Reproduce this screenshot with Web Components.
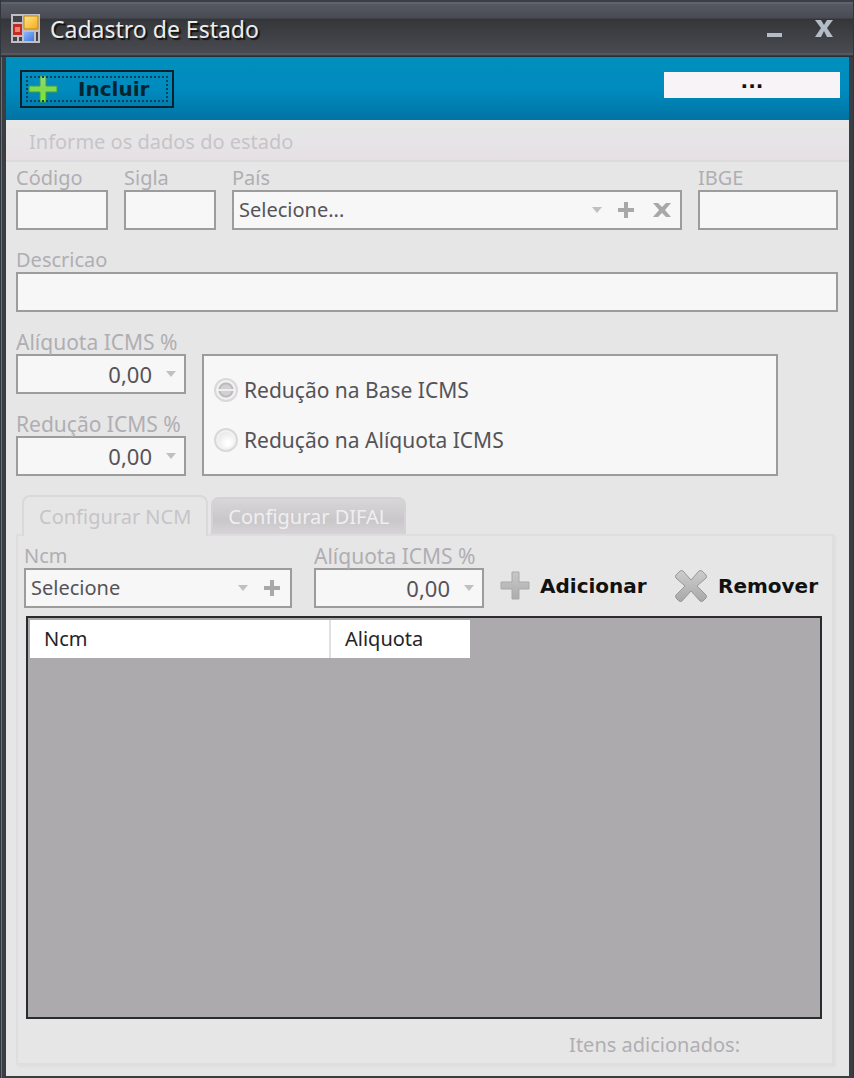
<!DOCTYPE html>
<html lang="pt-BR">
<head>
<meta charset="utf-8">
<meta name="viewport" content="width=device-width, initial-scale=1">
<title>Cadastro de Estado</title>
<style>
  body {
    margin: 0;
    font-family: "Noto Sans", "Open Sans", sans-serif;
    font-size: 20px;
    line-height: 24px;
    color: #555358;
    --label: #b0aeb3;
    --field-border: #9c9c9c;
    --field-bg: #f7f7f7;
    --surface: #e6e6e6;
  }
</style>
</head>
<body>
<app-window caption="Cadastro de Estado">
  <tool-bar>
    <tool-button icon="add" boxed>Incluir</tool-button>
    <status-button slot="end">...</status-button>
  </tool-bar>
  <section-title>Informe os dados do estado</section-title>
  <form-area>
    <field-row columns="92px 92px minmax(0, 1fr) 140px">
      <text-field label="Código"></text-field>
      <text-field label="Sigla"></text-field>
      <select-field label="País" value="Selecione..." actions="add clear"></select-field>
      <text-field label="IBGE"></text-field>
    </field-row>
    <field-row columns="minmax(0, 1fr)">
      <text-field label="Descricao"></text-field>
    </field-row>
    <tax-row>
      <number-field label="Alíquota ICMS %" value="0,00"></number-field>
      <number-field label="Redução ICMS %" value="0,00"></number-field>
      <radio-box slot="options" options="Redução na Base ICMS|Redução na Alíquota ICMS"></radio-box>
    </tax-row>
  </form-area>
  <tab-panel tabs="Configurar NCM|Configurar DIFAL">
    <ncm-bar>
      <select-field label="Ncm" value="Selecione" actions="add"></select-field>
      <number-field label="Alíquota ICMS %" value="0,00"></number-field>
      <tool-button slot="actions" icon="add-gray">Adicionar</tool-button>
      <tool-button slot="actions" icon="remove">Remover</tool-button>
    </ncm-bar>
    <data-grid></data-grid>
    <grid-footer>Itens adicionados:</grid-footer>
  </tab-panel>
</app-window>

<script>
const ICONS = {
  add: `<svg width="30" height="28" viewBox="0 0 30 28" aria-hidden="true">
    <defs><linearGradient id="g" x1="0" y1="0" x2="0" y2="1"><stop offset="0" stop-color="#8fd88a"/><stop offset=".5" stop-color="#7fd850"/><stop offset="1" stop-color="#7fee1c"/></linearGradient></defs>
    <path d="M12 1h6v10h11v6H18v10h-6V17H1v-6h11z" fill="url(#g)" stroke="#3f9c42"/></svg>`,
  "add-gray": `<svg width="30" height="30" viewBox="0 0 30 30" aria-hidden="true">
    <defs><linearGradient id="g" x1="0" y1="0" x2="0" y2="1"><stop offset="0" stop-color="#c8c8c8"/><stop offset="1" stop-color="#adadad"/></linearGradient></defs>
    <path d="M12 1h7v10h10v7H19v10h-7V18H1v-7h11z" fill="url(#g)" stroke="#a9a9a9"/></svg>`,
  remove: `<svg width="34" height="34" viewBox="0 0 34 34" aria-hidden="true">
    <defs><linearGradient id="g" x1="0" y1="0" x2="0" y2="1"><stop offset="0" stop-color="#cdcdcd"/><stop offset="1" stop-color="#a9a9a9"/></linearGradient></defs>
    <path d="M6 2 2 6q-1 2 0 3l9 8-9 9q-1 1 0 3l3 3q2 1 3 0l9-10 9 10q1 1 3 0l3-3q1-2 0-3l-9-9 9-8q1-1 0-3l-4-4q-2-1-3 0l-8 9-8-9q-1-1-3 0z" fill="url(#g)" stroke="#979797"/></svg>`,
  arrow: `<svg width="10" height="6" viewBox="0 0 10 6" aria-hidden="true"><path d="M0 0h10L5 6z" fill="#c0c0c0"/></svg>`,
  plus: `<svg width="16" height="16" viewBox="0 0 16 16" aria-hidden="true"><path d="M8 0v16M0 8h16" stroke="#a8a8a8" stroke-width="4"/></svg>`,
  cross: `<svg width="18" height="14" viewBox="0 0 18 14" aria-hidden="true"><path d="M0 0h5l4 4 4-4h5l-6 7 6 7h-5l-4-4-4 4H0l6-7z" fill="#a8a8a8"/></svg>`
};

const FIELD_CSS = `
  :host { display: block; min-width: 0; }
  * { box-sizing: border-box; }
  label { display: block; height: 24px; line-height: 24px; color: var(--label); white-space: nowrap; }
  .box { display: flex; align-items: center; height: 40px; border: 2px solid var(--field-border); background: var(--field-bg); }
  input, select { flex: 1; min-width: 0; width: 100%; height: 36px; margin: 0; border: 0; padding: 0 5px; background: none;
    font: inherit; color: #555358; opacity: 1; appearance: none; outline: 0; border-radius: 0; }
  button { border: 0; padding: 0; background: none; display: grid; place-items: center; flex: none; height: 36px; }
  svg { display: block; }
`;

let uid = 0;
function define(name, render) {
  customElements.define(name, class extends HTMLElement {
    constructor() { super(); this.attachShadow({ mode: "open" }); }
    connectedCallback() {
      if (!this.shadowRoot.firstChild) this.shadowRoot.innerHTML = render(this, "c" + (++uid));
    }
  });
}

define("app-window", el => `<style>
  :host { display: flex; flex-direction: column; box-sizing: border-box; min-height: 100vh; background: #393e43;
    border: solid #30363c; border-width: 0 1px; padding: 0 4px 2px 5px; box-shadow: inset 1px 0 #6a7078; }
  header { display: flex; align-items: center; height: 57px; margin: 0 -4px 0 -5px; padding: 0 14px 0 10px; box-sizing: border-box;
    background: linear-gradient(#393e47 0 2px, #5f646c 2px 4px, #565962 4px, #484b53 18px, #343639 19px, #4a4b52 53px, #62656a 54px, #292f36 56px); gap: 10px; }
  h1 { flex: 1; margin: 0; font-size: 23px; line-height: 28px; font-weight: 400; color: #ececec; text-shadow: 2px 2px 1px #111; }
  button { border: 0; padding: 0; background: none; width: 30px; height: 30px; display: grid; place-items: center; }
  nav { display: flex; gap: 20px; }
  main { flex: 1; display: flex; flex-direction: column; background: var(--surface); }
</style>
<header>
  <svg width="29" height="29" viewBox="0 0 29 29" aria-hidden="true">
    <defs><linearGradient id="y" x1="0" y1="0" x2="1" y2="1"><stop offset="0" stop-color="#ffe58a"/><stop offset="1" stop-color="#f5ac18"/></linearGradient>
    <linearGradient id="b" x1="0" y1="0" x2="1" y2="1"><stop offset="0" stop-color="#8cb8ff"/><stop offset="1" stop-color="#4178dc"/></linearGradient></defs>
    <path d="M0 0h29v29H0z" fill="#c2bfc4"/>
    <path d="M2 2h9v6H2zM2 23h4v4H2zM8 23h3v4H8zM25 18h2v9h-2z" fill="#43444a"/>
    <path d="M2 10h9v11H2z" fill="#c42a20"/><path d="M4 13h5v5H4z" fill="#ee8273"/>
    <path d="M13 2h14v13H13z" fill="url(#y)" stroke="#bd8514"/>
    <path d="M13 18h10v9H13z" fill="url(#b)"/>
  </svg>
  <h1>${el.getAttribute("caption")}</h1>
  <nav>
    <button type="button" aria-label="Minimizar"><svg width="15" height="16"><path d="M0 12h15v4H0z" fill="#b4bcc8"/></svg></button>
    <button type="button" aria-label="Fechar"><svg width="18" height="17" viewBox="0 0 18 17"><path d="M0 0h6l3 5 3-5h6l-6 8 6 9h-6l-3-6-3 6H0l6-9z" fill="#b4bcc8"/></svg></button>
  </nav>
</header>
<main><slot></slot></main>`);

define("tool-bar", () => `<style>
  :host { display: flex; align-items: center; justify-content: space-between; height: 63px; box-sizing: border-box; padding: 0 9px 0 14px;
    background: linear-gradient(#0090bd, #008bbf 50%, #0074a4); }
</style><slot></slot><slot name="end"></slot>`);

define("status-button", () => `<style>
  :host { display: flex; margin-bottom: 8px; }
  button { width: 176px; height: 26px; border: 0; padding: 0 0 8px; background: #f7f3f7; font: bold 20px/18px "DejaVu Sans", sans-serif; color: #111; }
</style><button type="button"><slot></slot></button>`);

define("tool-button", el => `<style>
  :host { display: flex; }
  button { display: flex; align-items: center; gap: 10px; border: 0; padding: 0; background: none; color: #111;
    font: bold 20px/24px "DejaVu Sans", sans-serif; }
  :host([boxed]) button { width: 154px; height: 38px; border: 2px solid #06222e; padding: 0 6px; gap: 20px; color: #042430;
    outline: 2px dotted #06455e; outline-offset: -8px; }
  svg { flex: none; display: block; }
</style><button type="button">${ICONS[el.getAttribute("icon")]}<span><slot></slot></span></button>`);

define("section-title", () => `<style>
  :host { display: block; box-sizing: border-box; height: 42px; padding: 10px 23px 0; color: #c6c4c8;
    background: linear-gradient(#e7e7e7, #e6e4e6 60%, #e6e0e4); border-bottom: 2px solid #dcdadc; }
  h2 { margin: 0; font-size: 20px; line-height: 24px; font-weight: 400; }
</style><h2><slot></slot></h2>`);

define("form-area", () => `<style>
  :host { display: flex; flex-direction: column; gap: 18px; padding: 4px 11px 0 10px; }
</style><slot></slot>`);

define("field-row", el => `<style>
  :host { display: grid; grid-template-columns: ${el.getAttribute("columns")}; gap: 16px; }
</style><slot></slot>`);

define("text-field", (el, id) => `<style>${FIELD_CSS}</style>
<label for="${id}">${el.getAttribute("label")}</label><div class="box"><input id="${id}" type="text" disabled></div>`);

define("number-field", (el, id) => `<style>${FIELD_CSS}
  label { font-size: 21px; }
  input { font-size: 22px; text-align: right; padding: 0; } button { width: 26px; margin-left: 6px; }</style>
<label for="${id}">${el.getAttribute("label")}</label>
<div class="box"><input id="${id}" type="text" inputmode="decimal" value="${el.getAttribute("value")}" disabled>
<button type="button" aria-label="Abrir" disabled>${ICONS.arrow}</button></div>`);

define("select-field", (el, id) => {
  const a = el.getAttribute("actions");
  return `<style>${FIELD_CSS} .arrow { padding-right: 6px; } button { width: 36px; }</style>
<label for="${id}">${el.getAttribute("label")}</label>
<div class="box"><select id="${id}" disabled><option>${el.getAttribute("value")}</option></select><span class="arrow">${ICONS.arrow}</span>
${a.includes("add") ? `<button type="button" aria-label="Adicionar" disabled>${ICONS.plus}</button>` : ""}
${a.includes("clear") ? `<button type="button" aria-label="Limpar" disabled>${ICONS.cross}</button>` : ""}</div>`;
});

define("tax-row", () => `<style>
  :host { display: grid; grid-template-columns: 170px minmax(0, 576px); gap: 16px; }
  .rates { display: flex; flex-direction: column; gap: 18px; }
  .options { display: flex; padding-top: 24px; }
</style><div class="rates"><slot></slot></div><div class="options"><slot name="options"></slot></div>`);

define("radio-box", (el, id) => `<style>
  :host { flex: 1; box-sizing: border-box; border: 2px solid var(--field-border); background: var(--field-bg); padding: 0 10px; }
  fieldset { border: 0; margin: 0; padding: 0; height: 100%; display: flex; flex-direction: column; justify-content: center; gap: 26px; }
  label { display: flex; align-items: center; gap: 6px; font-size: 21px; line-height: 24px; }
  input { appearance: none; box-sizing: border-box; margin: 0; width: 24px; height: 24px; border-radius: 50%; border: 2px solid #dad8da;
    background: radial-gradient(circle at 60% 65%, #fff 10%, #e4e2e4 80%); box-shadow: inset 0 0 0 2px #f2f2f2; }
  input:checked { background: linear-gradient(transparent 9px, #f0eef0 9px 11px, transparent 11px), radial-gradient(circle, #d2d0d2 0 5px, #bcbabc 6px 7px, #e8e8e8 8px); }
</style><fieldset disabled aria-label="Tipo de redução">${el.getAttribute("options").split("|").map((t, i) =>
  `<label><input type="radio" name="${id}"${i ? "" : " checked"}><span>${t}</span></label>`).join("")}</fieldset>`);

define("tab-panel", el => `<style>
  :host { flex: 1; display: flex; flex-direction: column; padding: 19px 15px 11px 10px; }
  .tabs { display: flex; gap: 3px; align-items: flex-end; padding-left: 6px; }
  button { box-sizing: border-box; height: 37px; border: 2px solid #d4d2d4; border-bottom: 0; border-radius: 8px 8px 0 0; padding: 0 15px;
    font: inherit; color: #f0eff0; background: linear-gradient(#d8d6d8, #c9c7ca 60%, #d6d4d6); white-space: nowrap; }
  button[aria-selected="true"] { height: 41px; margin-bottom: -2px; border-color: #dad8da; color: #c6c4c8; background: var(--surface); position: relative; }
  .panel { flex: 1; display: flex; flex-direction: column; border: 2px solid #dfdddf; box-shadow: 2px 2px 2px #dedede; padding: 8px 10px 6px 6px; }
</style><div class="tabs" role="tablist">${el.getAttribute("tabs").split("|").map((t, i) =>
  `<button type="button" role="tab" aria-selected="${i === 0}">${t}</button>`).join("")}</div>
<div class="panel" role="tabpanel"><slot></slot></div>`);

define("ncm-bar", () => `<style>
  :host { display: grid; grid-template-columns: 268px 170px minmax(0, 1fr); column-gap: 22px; padding: 0 4px 8px 0; }
  .actions { display: flex; justify-content: space-between; align-items: center; padding-top: 20px; margin-left: -6px; }
</style><slot></slot><div class="actions"><slot name="actions"></slot></div>`);

define("data-grid", () => `<style>
  :host { flex: 1; display: block; margin-left: 2px; border: 2px solid #2c2b2e; background: #acaaac; padding: 2px; }
  table { border-collapse: collapse; table-layout: fixed; width: 440px; background: #fff; }
  th { box-sizing: border-box; height: 38px; padding: 0 14px; text-align: left; font-weight: 400; color: #252328; }
  th:first-child { width: 300px; border-right: 2px solid #e2e0e2; }
</style><table><thead><tr><th scope="col">Ncm</th><th scope="col">Aliquota</th></tr></thead></table>`);

define("grid-footer", () => `<style>
  :host { display: flex; justify-content: flex-end; padding: 14px 82px 0 0; color: var(--label); }
</style><slot></slot>`);
</script>
</body>
</html>
